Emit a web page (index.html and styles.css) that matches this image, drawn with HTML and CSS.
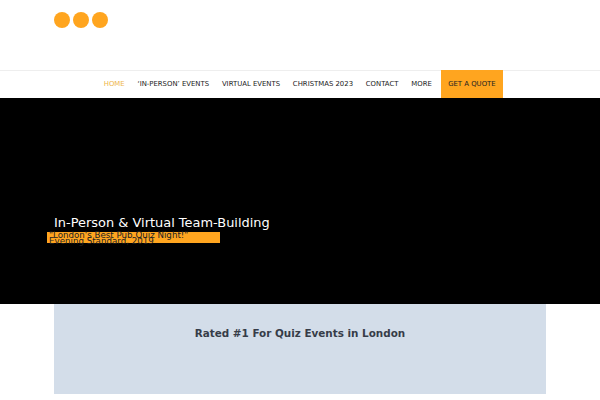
FILE: index.html
```html
<!DOCTYPE html>
<html>
<head>
    <meta charset="utf-8">
    <title>Quiz Events</title>
    <link rel="stylesheet" href="styles.css">
</head>

<body>
    <header class="top">
        <div class="logo">
            <span class="dot"></span>
            <span class="dot"></span>
            <span class="dot"></span>
        </div>
    </header>

    <nav class="menu">
        <a class="current" href="#">HOME</a>
        <a href="#">‘IN-PERSON’ EVENTS</a>
        <a href="#">VIRTUAL EVENTS</a>
        <a href="#">CHRISTMAS 2023</a>
        <a href="#">CONTACT</a>
        <a href="#">MORE</a>
        <a class="quote" href="#">GET A QUOTE</a>
    </nav>

    <section class="hero">
        <h1>In-Person &amp; Virtual Team-Building</h1>
        <p>"London's Best Pub Quiz Night!"<br>Evening Standard, 2019</p>
    </section>

    <section class="rated">
        <h2>Rated #1 For Quiz Events in London</h2>
    </section>
</body>
</html>
```

FILE: styles.css
```css
html, body {
	height: 400px;
	overflow: hidden;
}

body {
	margin: 0;
	font-family: "DejaVu Sans", sans-serif;
	background: #fff;
}

.top {
	height: 71px;
	box-sizing: border-box;
	padding: 12px 54px 0;
	border-bottom: 1px solid #eee;
}

.logo {
	display: flex;
	gap: 3px;
}

.dot {
	width: 16px;
	height: 16px;
	border-radius: 50%;
	background: #ffa51f;
}

.menu {
	height: 27px;
	display: flex;
	justify-content: center;
}

.menu a {
	padding: 0 6.4px;
	line-height: 26px;
	font-size: 6.9px;
	color: #222;
	text-decoration: none;
	white-space: nowrap;
}

.menu a.current {
	color: #eeb54a;
}

.menu a.quote {
	margin: -1px 0 0 3px;
	padding: 1px 7px 0;
	background: #ffa51f;
}

.hero {
	height: 206px;
	box-sizing: border-box;
	padding: 116px 54px 0;
	background: #000;
}

.hero h1 {
	margin: 0 0 1px;
	font-size: 12.95px;
	font-weight: normal;
	line-height: 17px;
	color: #fff;
}

.hero p {
	width: 173px;
	height: 11px;
	margin: 0 0 0 -7px;
	padding-left: 2px;
	box-sizing: border-box;
	font-size: 8.7px;
	line-height: 6px;
	background: #ffa51f;
	color: #222;
}

.rated {
	height: 90px;
	margin: 0 54px;
	padding-top: 22px;
	box-sizing: border-box;
	background: #d3dde9;
	text-align: center;
}

.rated h2 {
	margin: 0;
	font-size: 10.4px;
	line-height: 14px;
	color: #363c48;
}
```
